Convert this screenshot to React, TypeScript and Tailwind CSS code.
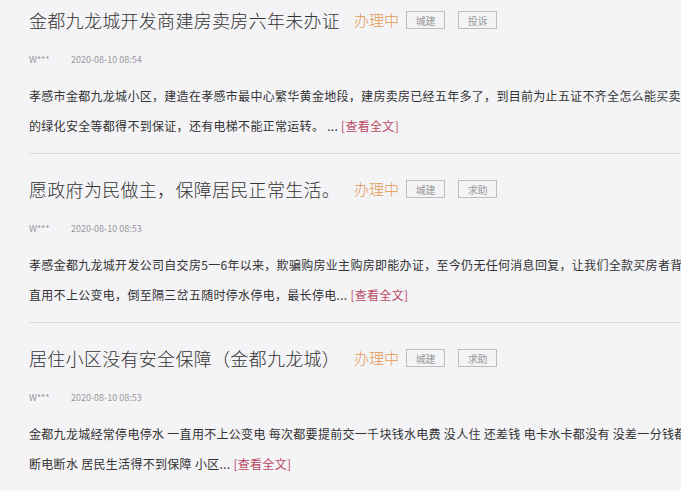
const posts = [
  {
    title: "金都九龙城开发商建房卖房六年未办证",
    tags: ["城建", "投诉"],
    user: "W***",
    time: "2020-08-10 08:54",
    line1:
      "孝感市金都九龙城小区，建造在孝感市最中心繁华黄金地段，建房卖房已经五年多了，到目前为止五证不齐全怎么能买卖房子",
    line2: "的绿化安全等都得不到保证，还有电梯不能正常运转。 ... ",
  },
  {
    title: "愿政府为民做主，保障居民正常生活。",
    tags: ["城建", "求助"],
    user: "W***",
    time: "2020-08-10 08:53",
    line1:
      "孝感金都九龙城开发公司自交房5一6年以来，欺骗购房业主购房即能办证，至今仍无任何消息回复，让我们全款买房者背负",
    line2: "直用不上公变电，倒至隔三岔五随时停水停电，最长停电... ",
  },
  {
    title: "居住小区没有安全保障（金都九龙城）",
    tags: ["城建", "求助"],
    user: "W***",
    time: "2020-08-10 08:53",
    line1:
      "金都九龙城经常停电停水 一直用不上公变电 每次都要提前交一千块钱水电费 没人住 还差钱 电卡水卡都没有 没差一分钱都",
    line2: "断电断水 居民生活得不到保障 小区... ",
  },
];

export default function App() {
  return (
    <div
      className="w-[681px] h-[491px] overflow-hidden bg-[#f4f3f6] text-[#333]"
      style={{ fontFamily: '"Noto Sans CJK SC", "Noto Sans", sans-serif' }}
    >
      <div className="-mt-[15px] pl-[29px]">
        {posts.map((p, i) => (
          <div key={i} className="pt-[15px] pb-[12px] border-b border-[#dcdcdc] -mr-[20px]">
            <div className="h-[40px] flex items-center">
              <h2 className="text-[18px] font-light tracking-[0.3px] whitespace-nowrap">{p.title}</h2>
              <span className="ml-[14px] text-[15px] font-light text-[#e09a52]">办理中</span>
              <span className="ml-[7px] w-[39px] h-[18px] border border-[#bdbdbd] flex items-center justify-center text-[10px] text-[#999]">
                {p.tags[0]}
              </span>
              <span className="ml-[13px] w-[39px] h-[18px] border border-[#bdbdbd] flex items-center justify-center text-[10px] text-[#999]">
                {p.tags[1]}
              </span>
            </div>
            <div className="h-[40px] flex items-center text-[9px] text-[#999]">
              <span className="w-[42px]">{p.user}</span>
              <span>{p.time}</span>
            </div>
            <div className="text-[12px] leading-[30px] tracking-[0.3px] whitespace-nowrap overflow-hidden">
              <p className="pt-[1px]">{p.line1}</p>
              <p>
                {p.line2}
                <a className="text-[#b94a62]">[查看全文]</a>
              </p>
            </div>
          </div>
        ))}
      </div>
    </div>
  );
}
